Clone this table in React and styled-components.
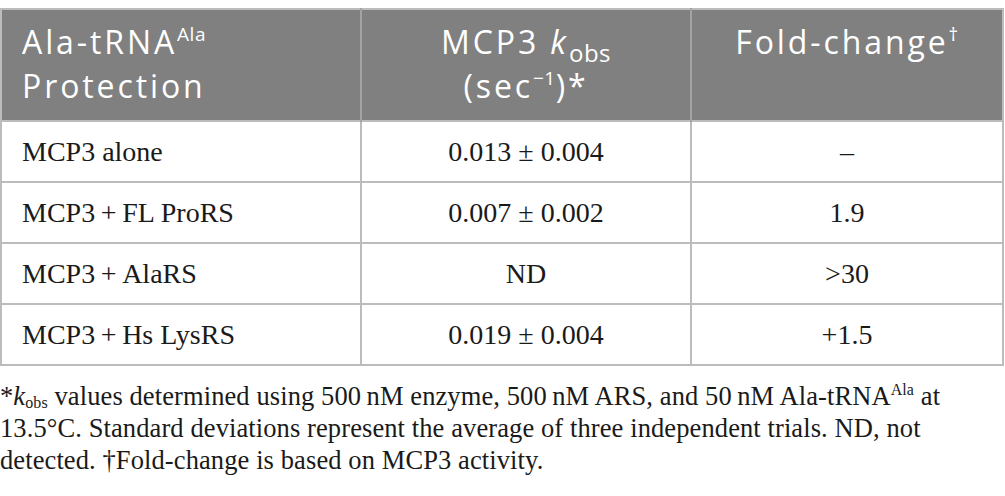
import styled, { createGlobalStyle } from "styled-components";

const GlobalStyle = createGlobalStyle`
  body {
    margin: 0;
    background: #ffffff;
  }
`;

const Page = styled.div`
  padding-top: 8px;
  width: 1005px;
`;

const Table = styled.table`
  width: 1004px;
  border-collapse: collapse;
  table-layout: fixed;
  border: 2px solid #bcbcbc;
`;

const HeadCell = styled.th`
  background: #808080;
  color: #ffffff;
  font-family: "Open Sans", "Noto Sans", sans-serif;
  font-weight: 400;
  font-size: 32px;
  line-height: 44px;
  letter-spacing: 2.9px;
  height: 100px;
  padding: 10px 20px 0;
  vertical-align: top;
  text-align: ${(p) => (p.$left ? "left" : "center")};
  border-left: 2px solid #a3a3a3;
  &:first-child {
    border-left: none;
  }
  sup {
    font-size: 19px;
    letter-spacing: 0.5px;
    vertical-align: 13px;
    line-height: 0;
  }
  sub {
    font-size: 24px;
    letter-spacing: 0.5px;
    vertical-align: -8px;
    line-height: 0;
  }
  i {
    letter-spacing: 3px;
  }
`;

const Cell = styled.td`
  font-family: "Liberation Serif", "Times New Roman", serif;
  font-size: 28px;
  color: #1a1a1a;
  height: 59px;
  padding: 0 20px;
  text-align: ${(p) => (p.$left ? "left" : "center")};
  border: 2px solid #bcbcbc;
`;

const Note = styled.p`
  margin: 14px 0 0;
  font-family: "Liberation Serif", "Times New Roman", serif;
  font-size: 26.5px;
  line-height: 32px;
  letter-spacing: 0.1px;
  color: #1a1a1a;
  white-space: nowrap;
  sub {
    font-size: 16px;
    vertical-align: -3px;
    line-height: 0;
  }
  sup {
    font-size: 16px;
    vertical-align: 10px;
    line-height: 0;
  }
`;

const rows = [
  ["MCP3 alone", "0.013 ± 0.004", "–"],
  ["MCP3\u2009+\u2009FL ProRS", "0.007 ± 0.002", "1.9"],
  ["MCP3\u2009+\u2009AlaRS", "ND", ">30"],
  ["MCP3\u2009+\u2009Hs LysRS", "0.019 ± 0.004", "+1.5"],
];

export default function App() {
  return (
    <Page>
      <GlobalStyle />
      <Table>
        <colgroup>
          <col style={{ width: 360 }} />
          <col style={{ width: 330 }} />
          <col />
        </colgroup>
        <thead>
          <tr>
            <HeadCell $left>
              Ala-tRNA<sup>Ala</sup>
              <br />
              Protection
            </HeadCell>
            <HeadCell>
              MCP3 <i>k</i>
              <sub>obs</sub>
              <br />
              (sec<sup>−1</sup>)*
            </HeadCell>
            <HeadCell>
              Fold-change<sup>†</sup>
            </HeadCell>
          </tr>
        </thead>
        <tbody>
          {rows.map((r) => (
            <tr key={r[0]}>
              <Cell $left>{r[0]}</Cell>
              <Cell>{r[1]}</Cell>
              <Cell>{r[2]}</Cell>
            </tr>
          ))}
        </tbody>
      </Table>
      <Note>
        *<i>k</i>
        <sub>obs</sub> values determined using 500{"\u2009"}nM enzyme, 500{"\u2009"}nM ARS,
        and 50{"\u2009"}nM Ala-tRNA<sup>Ala</sup> at
        <br />
        13.5°C. Standard deviations represent the average of three independent trials. ND, not
        <br />
        detected. †Fold-change is based on MCP3 activity.
      </Note>
    </Page>
  );
}
